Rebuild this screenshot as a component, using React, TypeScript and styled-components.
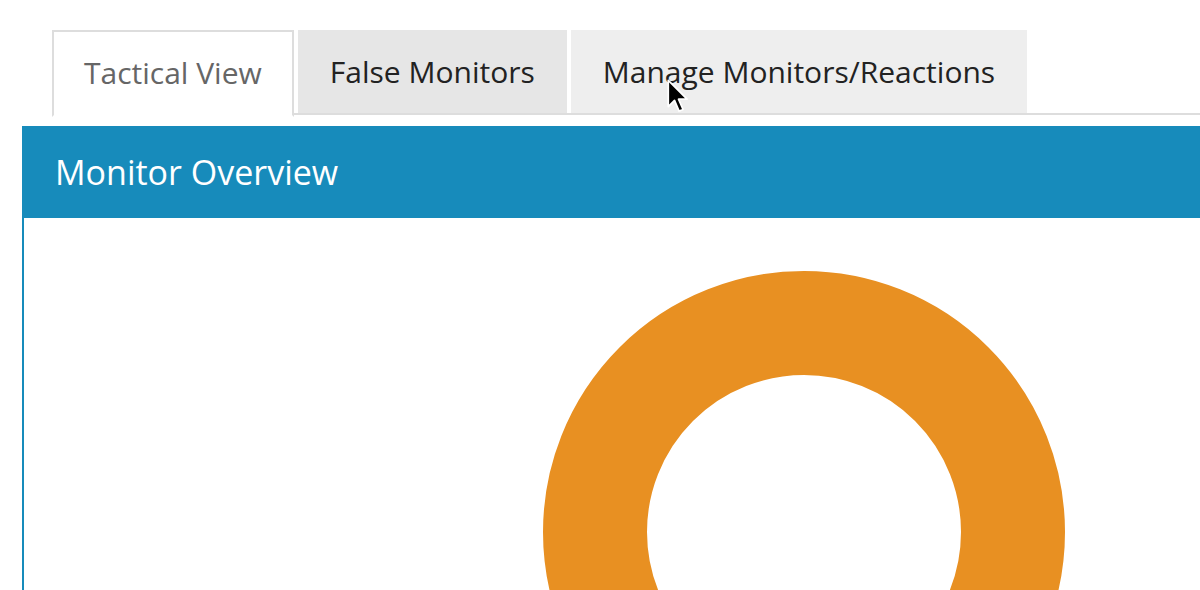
import React from 'react';
import styled, { createGlobalStyle } from 'styled-components';

const GlobalStyle = createGlobalStyle`
  html, body {
    margin: 0;
    padding: 0;
    background: #ffffff;
    overflow: hidden;
  }
  body {
    font-family: "Open Sans", "Liberation Sans", sans-serif;
  }
`;

const tabs = [
  { label: 'Tactical View', active: true, bg: '#ffffff' },
  { label: 'False Monitors', active: false, bg: '#e6e6e6' },
  { label: 'Manage Monitors/Reactions', active: false, bg: '#eeeeee' },
];

const App: React.FC = () => {
  return (
    <Page>
      <GlobalStyle />
      <TabBar>
        {tabs.map((tab) => (
          <Tab key={tab.label} $active={tab.active} $bg={tab.bg}>
            {tab.label}
            {tab.label === 'Manage Monitors/Reactions' && (
              <Cursor width="25" height="39" viewBox="0 0 22 34">
                <path
                  d="M2 2 L2 25 L7.5 19.5 L11.5 29 L15 27.5 L11 18.5 L18.5 18.5 Z"
                  fill="#000"
                  stroke="#fff"
                  strokeWidth="1.5"
                  strokeLinejoin="round"
                />
              </Cursor>
            )}
          </Tab>
        ))}
      </TabBar>

      <Panel>
        <PanelHeader>Monitor Overview</PanelHeader>
        <PanelBody>
          <svg width="522" height="522" viewBox="0 0 522 522">
            <circle cx="261" cy="261" r="209" fill="none" stroke="#e89022" strokeWidth="104" />
          </svg>
        </PanelBody>
      </Panel>
    </Page>
  );
};

const Page = styled.div`
  padding-top: 30px;
  height: 560px;
  overflow: hidden;
`;

const TabBar = styled.div`
  display: flex;
  gap: 4px;
  margin-left: 52px;
  height: 83px;
  border-bottom: 2px solid #dddddd;
`;

const Tab = styled.div<{ $active: boolean; $bg: string }>`
  position: relative;
  display: flex;
  align-items: center;
  padding: 0 30px 3px;
  height: ${(p) => (p.$active ? '80px' : '78px')};
  margin-bottom: ${(p) => (p.$active ? '-2px' : '0')};
  background: ${(p) => p.$bg};
  border: 2px solid ${(p) => (p.$active ? '#dddddd' : p.$bg)};
  border-bottom: ${(p) => (p.$active ? '2px solid #ffffff' : 'none')};
  color: ${(p) => (p.$active ? '#666666' : '#222222')};
  font-size: 30px;
  white-space: nowrap;
`;

const Cursor = styled.svg`
  position: absolute;
  left: 93px;
  top: 46px;
`;

const Panel = styled.div`
  margin-top: 11px;
  margin-left: 22px;
  width: 1560px;
  border-left: 2px solid #178bbb;
`;

const PanelHeader = styled.div`
  height: 92px;
  display: flex;
  align-items: center;
  padding-left: 31px;
  background: #178bbb;
  color: #ffffff;
  font-size: 34px;
`;

const PanelBody = styled.div`
  display: flex;
  justify-content: center;
  padding-top: 53px;
  background: #ffffff;
`;

export default App;
